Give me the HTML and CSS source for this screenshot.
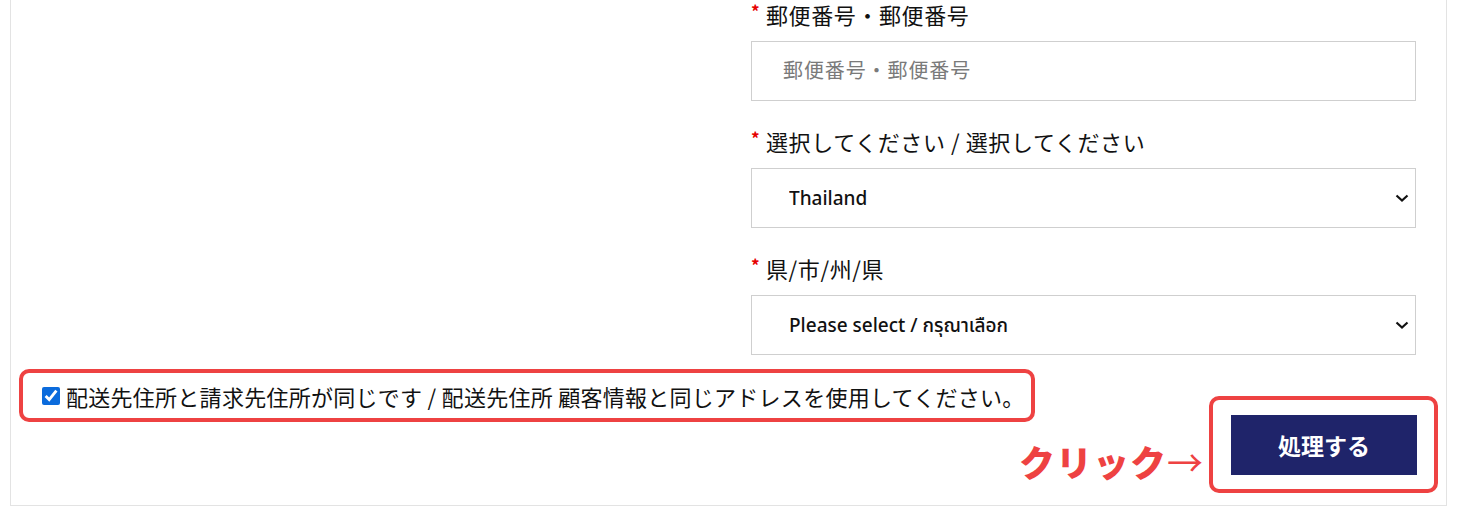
FILE: index.html
```html
<!DOCTYPE html>
<html lang="ja">
<head>
<meta charset="utf-8">
<title>Address form</title>
<link rel="stylesheet" href="styles.css">
</head>
<body>
<div class="card">
  <div class="form-col">
    <div class="field">
      <label class="field-label"><span class="req">*</span>郵便番号・郵便番号</label>
      <input class="control input" type="text" placeholder="郵便番号・郵便番号">
    </div>
    <div class="field">
      <label class="field-label"><span class="req">*</span>選択してください / 選択してください</label>
      <div class="select-wrap">
        <select class="control select"><option>Thailand</option></select>
        <svg class="chev" width="14" height="8" viewBox="0 0 14 8"><path d="M1.5 1.5 L7 6.5 L12.5 1.5" fill="none" stroke="#111" stroke-width="2.2"/></svg>
      </div>
    </div>
    <div class="field">
      <label class="field-label"><span class="req">*</span>県/市/州/県</label>
      <div class="select-wrap">
        <select class="control select"><option>Please select / กรุณาเลือก</option></select>
        <svg class="chev" width="14" height="8" viewBox="0 0 14 8"><path d="M1.5 1.5 L7 6.5 L12.5 1.5" fill="none" stroke="#111" stroke-width="2.2"/></svg>
      </div>
    </div>
  </div>
  <label class="same-address"><input class="check" type="checkbox" checked>配送先住所と請求先住所が同じです / 配送先住所 顧客情報と同じアドレスを使用してください。</label>
  <div class="actions">
    <span class="click-note">クリック<span class="arrow">→</span></span>
    <div class="btn-frame"><button class="btn" type="button">処理する</button></div>
  </div>
</div>
</body>
</html>
```

FILE: styles.css
```css
* { box-sizing: border-box; }
html, body { margin: 0; padding: 0; background: #fff; }
body {
  font-family: "Noto Sans CJK JP", "Noto Sans", sans-serif;
  color: #111;
}
.card {
  margin: 0 14px 0 10px;
  border: 1px solid #e3e3e3;
  border-top: none;
  padding-bottom: 12px;
}
.form-col {
  margin-left: 740px;
  width: 665px;
}
.field { margin-bottom: 26px; }
.field:last-child { margin-bottom: 0; }
.field-label {
  display: flex;
  align-items: flex-start;
  font-size: 22px;
  line-height: 28px;
  height: 28px;
  margin-bottom: 13px;
  letter-spacing: 0.6px;
  color: #111;
}
.req {
  color: #e60000;
  font-weight: 700;
  font-size: 17px;
  line-height: 22px;
  width: 15px;
}
.control {
  display: block;
  width: 100%;
  height: 60px;
  border: 1px solid #cfcfcf;
  border-radius: 0;
  background: #fff;
  margin: 0;
  outline: none;
}
.input {
  padding: 0 0 3px 31px;
  font-family: "Noto Sans CJK JP", sans-serif;
  font-size: 20px;
  letter-spacing: 0.9px;
  color: #111;
}
.input::placeholder { color: #7a7a7a; }
.select-wrap { position: relative; }
.select {
  appearance: none;
  -webkit-appearance: none;
  padding: 0 40px 0 37px;
  font-family: "Noto Sans", "Noto Sans Thai", "Noto Sans CJK JP", sans-serif;
  font-weight: 500;
  font-size: 19px;
  color: #111;
}
.chev {
  position: absolute;
  right: 7px;
  top: 26px;
  pointer-events: none;
}
.same-address {
  display: flex;
  align-items: center;
  width: fit-content;
  height: 53px;
  margin: 14px 0 0 8px;
  padding: 0 6px 0 19px;
  border: 4px solid #ee4242;
  border-radius: 10px;
  font-size: 22px;
  line-height: 28px;
  letter-spacing: 0.27px;
  color: #111;
}
.check {
  width: 18px;
  height: 18px;
  margin: 0 6px 0 0;
  accent-color: #0b6bdc;
}
.actions {
  display: flex;
  justify-content: flex-end;
  align-items: flex-end;
  margin: -26px 8px 0 0;
}
.click-note {
  color: #ee4242;
  font-weight: 900;
  font-size: 36px;
  line-height: 44px;
  letter-spacing: 1px;
  margin: 0 6px 10px 0;
}
.arrow { font-weight: 400; letter-spacing: 0; }
.btn-frame {
  border: 4px solid #ee4242;
  border-radius: 10px;
  padding: 15px 17px 14px 18px;
}
.btn {
  display: block;
  width: 186px;
  height: 60px;
  border: none;
  background: #1f246a;
  color: #fff;
  font-family: "Noto Sans CJK JP", sans-serif;
  font-weight: 700;
  font-size: 23px;
  cursor: pointer;
}
```
